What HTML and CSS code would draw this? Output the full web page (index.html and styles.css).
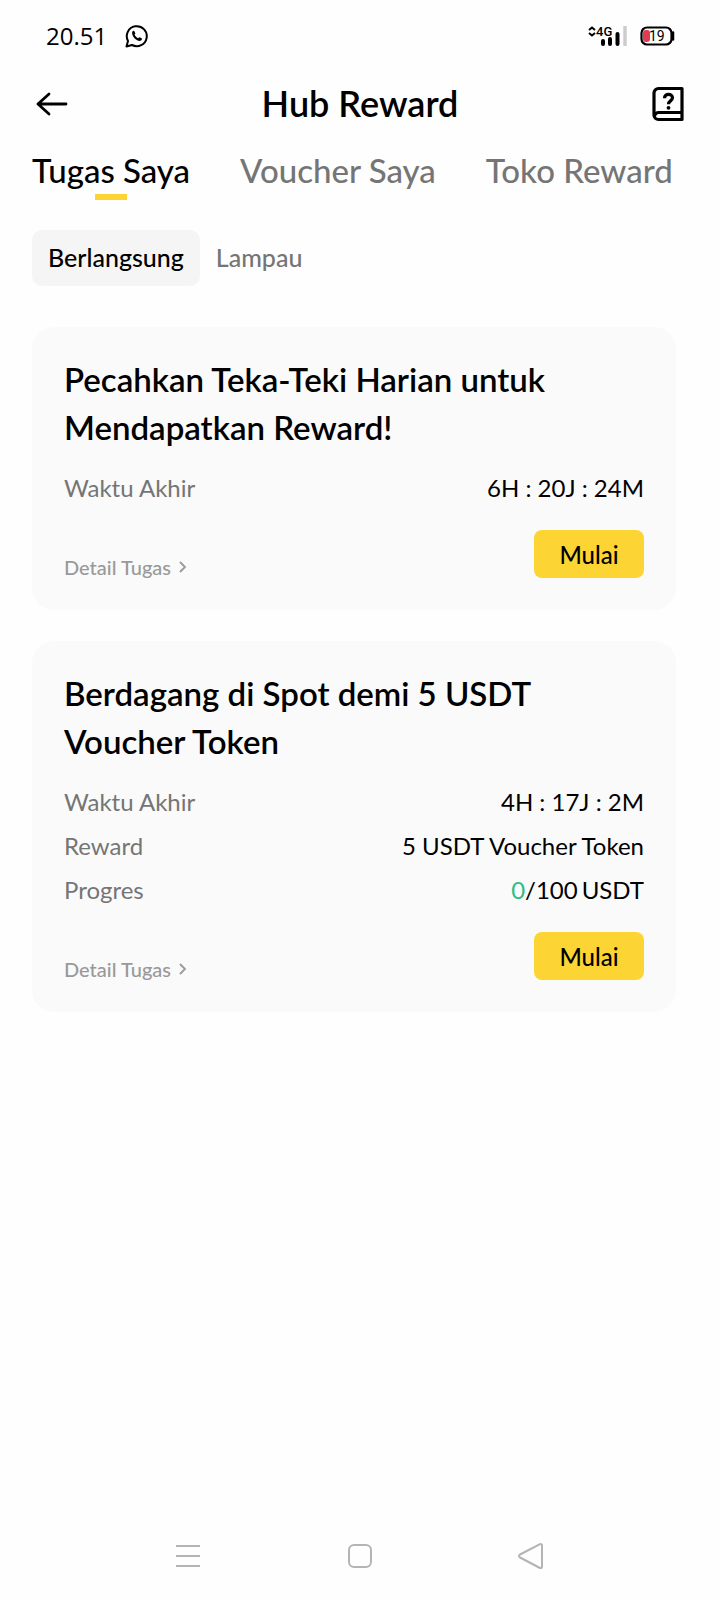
FILE: index.html
```html
<!DOCTYPE html>
<html lang="id">
<head>
<meta charset="utf-8">
<meta name="viewport" content="width=device-width, initial-scale=1">
<title>Hub Reward</title>
<link rel="stylesheet" href="styles.css">
</head>
<body>
<div class="screen">
  <div class="status">
    <div class="status-group">
      <span class="clock">20.51</span>
      <svg viewBox="0 0 24 24" width="24" height="24" fill="none" stroke="#000" stroke-width="2" aria-hidden="true">
        <path d="M1.500 22.500 3 17A10 10 0 1 1 7 21Z" stroke-linejoin="round"/>
        <path d="M7.400 7.600c.7-1.200 1.700-1.100 2.100-.2l.8 1.900c.2.600-.7 1.100-.7 1.500.7 1.600 1.900 2.700 3.400 3.400.5 0 1.100-1.200 1.600-1l2 1c.7.500.4 1.700-.6 2.300-1.700 1-4.200-.1-6-1.700-1.700-1.600-3.700-5-2.600-7.200Z" fill="#000" stroke="none"/>
      </svg>
    </div>
    <div class="status-group status-right">
      <svg viewBox="0 -4 40 30" width="40" height="30" aria-label="4G">
        <g fill="none" stroke="#000" stroke-width="2"><path d="M1 5 4 2.500 7 5M1 8 4 10.500 7 8"/></g>
        <text class="net" x="8" y="11">4G</text>
        <g stroke-width="4" stroke-linecap="round" stroke="#000"><path d="M15 16v3M22 14v5M29.500 9v10"/></g>
        <path d="M37 1v20" stroke="#ccc" stroke-width="3.500"/>
      </svg>
      <svg viewBox="0 0 36 20" width="36" height="20" aria-label="Baterai 19%">
        <rect x="1.500" y="1.500" width="30" height="17" rx="5.500" fill="#fff" stroke="#000" stroke-width="2.200"/>
        <path d="M33 6.500v7" stroke="#000" stroke-width="2.500" stroke-linecap="round"/>
        <rect x="3" y="4" width="7" height="12" rx="3" fill="#e5394f"/>
        <text class="charge" x="9" y="15">19</text>
      </svg>
    </div>
  </div>

  <header class="header">
    <button class="icon-btn" aria-label="Kembali">
      <svg viewBox="0 0 36 36" width="36" height="36" fill="none" stroke="#000" stroke-width="2.800" stroke-linecap="round" stroke-linejoin="round"><path d="M32 18H4M15 8 4 18l11 10"/></svg>
    </button>
    <h1 class="title">Hub Reward</h1>
    <button class="icon-btn" aria-label="Panduan">
      <svg viewBox="0 0 36 36" width="36" height="36" fill="none" stroke="#000" stroke-width="3.200" stroke-linejoin="round">
        <path d="M32 26.500V2.500H8.500A4.500 4.500 0 0 0 4 7V29A4.500 4.500 0 0 0 8.500 33.500H32V26.500H9A4.500 4.500 0 0 0 4.500 30"/>
        <path d="M14.500 12.200c0-5.200 8-5 8-.4 0 3.200-4 3-4 6.400"/>
        <circle cx="18.500" cy="21.800" r="1.900" fill="#000" stroke="none"/>
      </svg>
    </button>
  </header>

  <nav class="tabs">
    <a class="tab active" href="#tugas">Tugas Saya</a>
    <a class="tab" href="#voucher">Voucher Saya</a>
    <a class="tab" href="#toko">Toko Reward</a>
  </nav>

  <div class="filters">
    <button class="filter selected">Berlangsung</button>
    <button class="filter">Lampau</button>
  </div>

  <main class="cards">
    <section class="card">
      <h2 class="card-title">Pecahkan Teka-Teki Harian untuk Mendapatkan Reward!</h2>
      <dl class="facts">
        <div class="fact"><dt>Waktu Akhir</dt><dd>6H : 20J : 24M</dd></div>
      </dl>
      <div class="card-foot">
        <a class="detail" href="#detail-1">Detail Tugas <svg viewBox="0 0 8 14" width="8" height="14" fill="none" stroke="currentColor" stroke-width="1.800"><path d="M1 2 6 7 1 12"/></svg></a>
        <button class="start">Mulai</button>
      </div>
    </section>
    <section class="card">
      <h2 class="card-title">Berdagang di Spot demi 5 USDT Voucher Token</h2>
      <dl class="facts">
        <div class="fact"><dt>Waktu Akhir</dt><dd>4H : 17J : 2M</dd></div>
        <div class="fact"><dt>Reward</dt><dd>5 USDT Voucher Token</dd></div>
        <div class="fact"><dt>Progres</dt><dd class="progress"><span><span class="done">0</span>/100</span> <span>USDT</span></dd></div>
      </dl>
      <div class="card-foot">
        <a class="detail" href="#detail-2">Detail Tugas <svg viewBox="0 0 8 14" width="8" height="14" fill="none" stroke="currentColor" stroke-width="1.800"><path d="M1 2 6 7 1 12"/></svg></a>
        <button class="start">Mulai</button>
      </div>
    </section>
  </main>

  <div class="navbar">
    <button class="nav-btn" aria-label="Menu"><svg viewBox="0 0 28 28" width="28" height="28" fill="none" stroke="#b4b4b4" stroke-width="2"><path d="M2 4h24M2 14h24M2 24h24"/></svg></button>
    <button class="nav-btn" aria-label="Beranda"><svg viewBox="0 0 28 28" width="28" height="28" fill="none" stroke="#b4b4b4" stroke-width="2"><rect x="3" y="3" width="22" height="22" rx="5"/></svg></button>
    <button class="nav-btn" aria-label="Kembali ke sebelumnya"><svg viewBox="0 0 28 28" width="28" height="28" fill="none" stroke="#b4b4b4" stroke-width="2" stroke-linejoin="round"><path d="M22 2.200 2 12.500Q0 14 2 15.500L22 26Q24 26.500 24 24.500V3.500Q24 1.700 22 2.200Z"/></svg></button>
  </div>
</div>
</body>
</html>
```
FILE: styles.css
```css
* { box-sizing: border-box; }
body {
  margin: 0;
  background: #fefefe;
  color: #000;
  font-family: Lato, "Open Sans", sans-serif;
}
h1, h2, dl, dd { margin: 0; }
button { border: 0; padding: 0; background: none; font: inherit; color: inherit; }
a { color: inherit; text-decoration: none; }
svg { display: block; flex: none; }
.screen { display: flex; flex-direction: column; min-height: 100vh; }

.status {
  display: flex;
  justify-content: space-between;
  align-items: center;
  height: 72px;
  padding: 0 44px 0 46px;
}
.status-group { display: flex; align-items: center; gap: 18px; }
.status-right { gap: 12px; }
.clock { font: 24px/32px "Open Sans", sans-serif; }
.net { font: 500 13px Roboto, sans-serif; }
.charge { font: 14px Roboto, sans-serif; }

.header {
  display: flex;
  justify-content: space-between;
  align-items: center;
  height: 64px;
  padding: 0 34px;
}
.title { font-size: 36px; font-weight: 600; line-height: 40px; padding-bottom: 2px; }

.tabs { display: flex; gap: 50px; padding: 12px 32px 0; }
.tab {
  color: #757575;
  font-size: 33px;
  font-weight: 500;
  line-height: 44px;
  white-space: nowrap;
}
.active { color: #000; }
.active::after {
  content: "";
  display: block;
  width: 32px;
  height: 6px;
  margin: 2px auto 0;
  background: #fcd535;
}

.filters { display: flex; padding: 30px 32px 0; }
.filter {
  height: 56px;
  padding: 0 16px 2px;
  border-radius: 10px;
  color: #757575;
  font-size: 25px;
  font-weight: 500;
}
.selected { background: #f5f5f5; color: #000; }

.cards { display: grid; gap: 31px; padding: 41px 44px 0 32px; }
.card { padding: 28px 32px 32px; border-radius: 22px; background: #fafafa; }
.card-title { font-size: 33px; font-weight: 600; line-height: 48px; }
.facts { padding: 15px 0 20px; }
.fact { display: flex; justify-content: space-between; font-size: 24px; line-height: 44px; }
.fact dt { color: #757575; }
.progress { display: flex; gap: 4px; }
.done { color: #2ebd85; }
.card-foot { display: flex; justify-content: space-between; align-items: flex-end; }
.detail {
  display: flex;
  align-items: center;
  gap: 8px;
  color: #999;
  font-size: 20px;
  font-weight: 500;
  line-height: 22px;
}
.start {
  width: 110px;
  height: 48px;
  border-radius: 8px;
  background: #fcd535;
  font-size: 24px;
  font-weight: 500;
}

.navbar {
  display: grid;
  grid-template-columns: repeat(3, 172px);
  justify-content: center;
  justify-items: center;
  margin-top: auto;
  padding-bottom: 30px;
}
```
